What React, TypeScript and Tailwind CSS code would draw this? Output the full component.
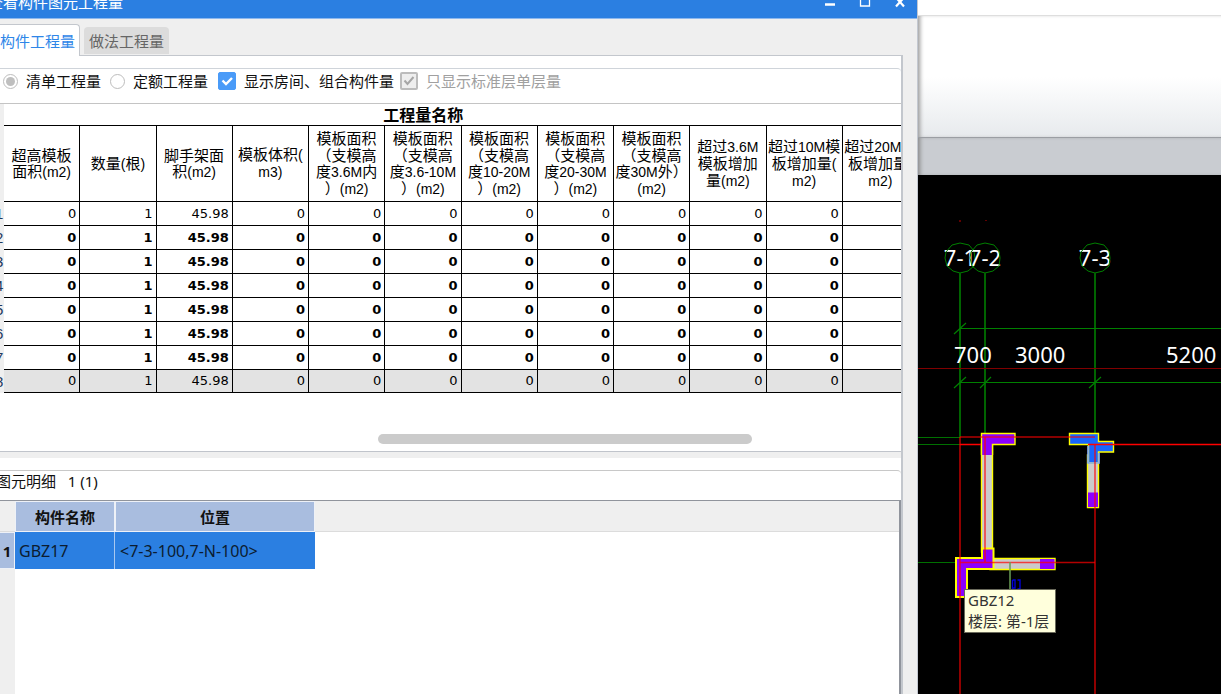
import React, { useState } from 'react';

const QUANTITY_COLUMNS: string[][] = [
  ['超高模板', '面积(m2)'],
  ['数量(根)'],
  ['脚手架面', '积(m2)'],
  ['模板体积(', 'm3)'],
  ['模板面积', '（支模高', '度3.6M内', '）(m2)'],
  ['模板面积', '（支模高', '度3.6-10M', '）(m2)'],
  ['模板面积', '（支模高', '度10-20M', '）(m2)'],
  ['模板面积', '（支模高', '度20-30M', '）(m2)'],
  ['模板面积', '（支模高', '度30M外）', '(m2)'],
  ['超过3.6M', '模板增加', '量(m2)'],
  ['超过10M模', '板增加量(', 'm2)'],
  ['超过20M模', '板增加量(', 'm2)'],
];

const VALUES = ['0', '1', '45.98', '0', '0', '0', '0', '0', '0', '0', '0', ''];

const ROWS = [1, 2, 3, 4, 5, 6, 7, 8].map((no) => ({
  no,
  values: VALUES,
  bold: no > 1 && no < 8,
  total: no === 8,
}));

// Latin runs are set in a narrower face, Chinese in the CJK one
const MixedText: React.FC<{ text: string }> = ({ text }) => (
  <>
    {text.split(/([ -~]+)/).map((part, i) =>
      i % 2 ? (
        <span key={i} className="font-['Liberation_Sans',sans-serif] text-[14px]">
          {part}
        </span>
      ) : (
        part
      ),
    )}
  </>
);

const TitleBar: React.FC = () => (
  <header className="flex h-[18px] items-end justify-between overflow-hidden bg-[#2b7fe1] text-white">
    <h1 className="-ml-3 pb-[6px] text-[15px] leading-5 whitespace-nowrap">查看构件图元工程量</h1>
    <div className="flex h-full">
      <button aria-label="最小化" className="flex w-[35px] justify-center">
        <svg width="12" height="8" viewBox="0 0 12 8">
          <path d="M1 4.5h10" stroke="#fff" strokeWidth="2.5" />
        </svg>
      </button>
      <button aria-label="最大化" className="flex w-[35px] justify-center">
        <svg width="12" height="8" viewBox="0 0 12 8">
          <path d="M1.5 -3v9h9v-9" fill="none" stroke="#fff" strokeWidth="1.3" />
        </svg>
      </button>
      <button aria-label="关闭" className="flex w-[35px] justify-center">
        <svg width="12" height="8" viewBox="0 0 12 8">
          <path d="M2 6.5L10 -2.5M2 -2.5L10 6.5" stroke="#fff" strokeWidth="2.2" />
        </svg>
      </button>
    </div>
  </header>
);

const Options: React.FC = () => {
  const [mode, setMode] = useState('list');
  const [showRooms, setShowRooms] = useState(true);
  const radio =
    "flex size-[15px] shrink-0 appearance-none items-center justify-center rounded-full border border-[#bdbdbd] bg-white before:size-[9px] before:rounded-full checked:before:bg-[#bfbfbf] before:content-['']";

  return (
    <div className="flex h-[34px] items-center overflow-hidden pb-[10px] pl-[3px] text-[15px] leading-5 whitespace-nowrap">
      <label className="flex items-center gap-2">
        <input type="radio" name="mode" className={radio} checked={mode === 'list'} onChange={() => setMode('list')} />
        清单工程量
      </label>
      <label className="ml-[9px] flex items-center gap-2">
        <input type="radio" name="mode" className={radio} checked={mode === 'quota'} onChange={() => setMode('quota')} />
        定额工程量
      </label>
      <label className="ml-[10px] flex items-center gap-2">
        <span className="relative flex">
          <input
            type="checkbox"
            className="size-[18px] appearance-none rounded-xs border border-[#4a9bf8] bg-white checked:bg-[#4a9bf8]"
            checked={showRooms}
            onChange={(e) => setShowRooms(e.target.checked)}
          />
          <svg className="pointer-events-none absolute inset-0" width="18" height="18" viewBox="0 0 18 18">
            <path d="M4.5 8.5l3.5 3.5 6-6" fill="none" stroke="#fff" strokeWidth="2.4" />
          </svg>
        </span>
        显示房间、组合构件量
      </label>
      <label className="ml-[6px] flex items-center gap-2 text-[#a0a0a0]">
        <span className="relative flex">
          <input
            type="checkbox"
            disabled
            checked
            readOnly
            className="size-[18px] appearance-none rounded-xs border-2 border-[#bcbcbc] bg-[#eee]"
          />
          <svg className="pointer-events-none absolute inset-0" width="18" height="18" viewBox="0 0 18 18">
            <path d="M4.5 8.5l3 3.5 6-7" fill="none" stroke="#a6a6a6" strokeWidth="2" />
          </svg>
        </span>
        只显示标准层单层量
      </label>
    </div>
  );
};

const QuantityTable: React.FC = () => (
  <div className="overflow-hidden border-t border-[#c4c4c4]">
    <table className="w-[919px] table-fixed border-separate border-spacing-0 text-black">
      <colgroup>
        <col className="w-1" />
        {QUANTITY_COLUMNS.map((_, i) => (
          <col key={i} />
        ))}
      </colgroup>
      <thead>
        <tr className="h-[22px]">
          <td className="bg-[#efefef] p-0" />
          <th colSpan={11} className="border-b border-black p-0 text-[16px] leading-5 font-bold">
            工程量名称
          </th>
          <td className="border-b border-black p-0" />
        </tr>
        <tr className="h-[76px]">
          <td className="bg-[#efefef] p-0" />
          {QUANTITY_COLUMNS.map((lines, i) => (
            <th
              key={i}
              className="border-r border-b border-black p-0 text-[15px] leading-[17px] font-normal whitespace-nowrap"
            >
              {lines.map((line) => (
                <div key={line} className="flex h-[17px] items-center justify-center">
                  <span>
                    <MixedText text={line} />
                  </span>
                </div>
              ))}
            </th>
          ))}
        </tr>
      </thead>
      <tbody>
        {ROWS.map((row) => (
          <tr key={row.no} className={row.total ? 'h-[23px] bg-[#e3e3e3]' : 'h-6'}>
            <th className="overflow-hidden bg-[#efefef] p-0 text-left font-['Liberation_Sans',sans-serif] text-[15px] leading-5 font-normal text-[#1f3a5f]">
              <div className="-ml-[5px]">{row.no}</div>
            </th>
            {row.values.map((value, i) => (
              <td
                key={i}
                className={
                  row.bold
                    ? "border-r border-b border-black p-0 pr-[3px] text-right font-['DejaVu_Sans',sans-serif] text-[13px] leading-5 font-bold"
                    : "border-r border-b border-black p-0 pr-[3px] text-right font-['DejaVu_Sans',sans-serif] text-[13px] leading-5"
                }
              >
                {value}
              </td>
            ))}
          </tr>
        ))}
      </tbody>
    </table>
  </div>
);

const DetailTable: React.FC = () => (
  <div className="flex-1 border-t border-r-2 border-[#90949c] bg-[linear-gradient(to_right,#efefef_15px,#fff_15px)]">
    <table className="w-full table-fixed border-separate border-spacing-0 text-[15px] leading-5">
      <colgroup>
        <col className="w-[15px]" />
        <col className="w-[100px]" />
        <col className="w-[200px]" />
        <col />
      </colgroup>
      <thead>
        <tr className="h-[31px]">
          <td className="border-b border-[#dcdcdc] bg-[#efefef] p-0" />
          <th className="border border-[#eef1f7] bg-[#a9bddf] p-0 font-bold">构件名称</th>
          <th className="border border-[#eef1f7] bg-[#a9bddf] p-0 font-bold">位置</th>
          <td className="border-b border-[#dcdcdc] bg-[#efefef] p-0" />
        </tr>
      </thead>
      <tbody>
        <tr className="h-[37px]">
          <th className="border-y border-r border-[#eef1f7] bg-[#a9bddf] p-0 font-bold">1</th>
          <td className="border-r border-[#a9c8f0] bg-[#2b7fe1] p-0 pl-1 text-[16px] text-[#0c1c30]">GBZ17</td>
          <td className="bg-[#2b7fe1] p-0 pl-[5px] text-[16px] text-[#0c1c30]">&lt;7-3-100,7-N-100&gt;</td>
          <td />
        </tr>
      </tbody>
    </table>
  </div>
);

const QuantityDialog: React.FC = () => {
  const [tab, setTab] = useState('component');

  return (
    <section className="flex min-w-0 flex-1 flex-col border-r border-[#c3c8d1] bg-[#efefef]">
      <TitleBar />
      <div className="flex flex-1 flex-col border-t border-[#8db8ee] pr-[14px]">
        <nav className="-mb-px flex h-[37px] items-end gap-1 pt-[5px] text-[15px] leading-5">
          <button
            onClick={() => setTab('component')}
            className="z-10 h-full rounded-tr border-t border-r border-[#c3c7cd] bg-white pr-1 text-[#2e86e8]"
          >
            构件工程量
          </button>
          <button
            onClick={() => setTab('method')}
            aria-pressed={tab === 'method'}
            className="mb-[2px] h-[27px] rounded-t bg-[#dcdcdc] px-[5px] text-[#666]"
          >
            做法工程量
          </button>
        </nav>
        <div className="flex flex-1 flex-col border-t border-r-2 border-[#c3c7cd] bg-white pt-3">
          <div className="rounded-tr border-y border-t-[#cfd4da] border-b-[#c0c4cb]">
            <Options />
            <QuantityTable />
            <div className="h-[58px] pt-[41px]">
              <div className="mr-[16.5%] ml-[42%] h-[10px] rounded-full bg-[#cbcbcb]" />
            </div>
          </div>
          <div className="h-[6px] bg-[#efefef]" />
          <div className="mt-3 flex flex-1 flex-col rounded-tr border-t border-[#c8c8c8]">
            <h2 className="-ml-1 h-[29px] text-[15px] leading-5 whitespace-pre">{'图元明细   1 (1)'}</h2>
            <DetailTable />
          </div>
        </div>
      </div>
    </section>
  );
};

const AXES = [
  { x: 960, label: '7-1' },
  { x: 985, label: '7-2' },
  { x: 1095, label: '7-3' },
];

const Drawing: React.FC = () => (
  <svg
    width="303"
    height="519"
    viewBox="918 175 303 519"
    className="block font-['Noto_Sans',sans-serif] text-[22px]"
    role="img"
    aria-label="平面图"
  >
    <path d="M960 220v2M986 220v1" stroke="#800000" strokeWidth="1.5" />

    {/* axis bubbles and their grid lines */}
    {AXES.map(({ x, label }) => (
      <g key={label}>
        <text x={x} y="266" textAnchor="middle" fill="#fff">
          {label}
        </text>
        <path
          d={`M${x} 243l-8 2-6 7-1 6 2 8 6 5 7 2 8-2 6-5 1-8-1-7-5-6z`}
          fill="none"
          stroke="#008000"
        />
        <path d={`M${x} 273V437`} stroke="#006400" strokeWidth="2" />
      </g>
    ))}

    {/* dimension chains */}
    <path
      d="M960 328.5H1221M960 382.5H1221M954 334l12-11M954 388l12-11M980 388l11-11M1089 388l12-11"
      fill="none"
      stroke="#008000"
      strokeWidth="1.2"
    />
    <path d="M918 368.5H1221" stroke="#800000" />
    <g fill="#fff">
      <text x="954" y="363">700</text>
      <text x="1015" y="363">3000</text>
      <text x="1166" y="363">5200</text>
    </g>
    <path d="M918 437.5H960M918 444.5H960M918 562.5H960" stroke="#007000" />

    {/* walls */}
    <g fill="#cbcbcb" stroke="#ffff00" strokeWidth="1.4">
      <path d="M981.5 444H992.5V552H981.5z" />
      <path d="M990 558.5H1055V569.5H990z" />
      <path d="M1087.5 455H1098.5V507.5H1087.5z" />
    </g>
    <path d="M1040 559H1054.500V569H1040zM1088 492.5H1098V507H1088z" fill="#8c00ff" />

    {/* columns */}
    <path d="M981.5 455V433.5H1015V444.5H992.5V455z" fill="#8c00ff" />
    <path d="M981.5 455V433.5H1015V444.5H992.5V455" fill="none" stroke="#ffff00" strokeWidth="1.4" />
    <path
      d="M982 548.5H993.5V569H967V597H956V558H982z"
      fill="#8c00ff"
      stroke="#ffff00"
      strokeWidth="2"
    />
    <path
      d="M1069.5 433.5H1098.5V441.5H1113.5V452H1098.5V463H1088.5V444.5H1069.5z"
      fill="#1766ff"
      stroke="#ffff00"
      strokeWidth="1.4"
    />
    <path d="M1088 446V463H1099V453" fill="none" stroke="#7ea6ff" strokeWidth="1.6" />

    {/* axis lines over the members */}
    <g stroke="#ff0000" strokeOpacity="0.7" strokeWidth="1.6">
      <path d="M960 437V694M985 437V562M1095 444V694" />
      <path d="M960 437H1095M960 562.5H1095" />
    </g>
    <path d="M960 444.5H981M1088 444.5H1221" stroke="#ff0000" strokeWidth="1.3" />
    <path d="M1010 562V590" stroke="#6a9e55" strokeWidth="1.5" />
    <path
      d="M1012.5 580v9M1012.5 580h2.5v8h-2.500M1017.500 580h2.500v9h-2.500"
      fill="none"
      stroke="#0000d8"
      strokeWidth="1.4"
    />
  </svg>
);

const CadView: React.FC = () => (
  <main className="flex w-[303px] shrink-0 flex-col bg-black">
    <div className="h-4 border-b border-[#dedede] bg-white" />
    <div className="h-[122px] border-b border-[#9b9ea3] bg-linear-to-b from-white from-50% to-[#e7eaed] shadow-[inset_4px_0_4px_-2px_#999]" />
    <div className="h-[37px] bg-[#c9ccd1] shadow-[inset_4px_0_4px_-2px_#888]" />
    <div className="relative">
      <Drawing />
      <div
        role="tooltip"
        className="absolute top-[414px] left-[46px] border border-[#6b6b5c] bg-[#ffffdc] pr-[6px] pl-[3px] text-[15px] leading-[21px] whitespace-nowrap text-[#333]"
      >
        <div>GBZ12</div>
        <div>楼层: 第-1层</div>
      </div>
    </div>
  </main>
);

export default function App() {
  return (
    <div className="flex min-h-screen overflow-hidden bg-white font-['Noto_Sans','Noto_Sans_CJK_SC',sans-serif] text-[#111]">
      <QuantityDialog />
      <CadView />
    </div>
  );
}
